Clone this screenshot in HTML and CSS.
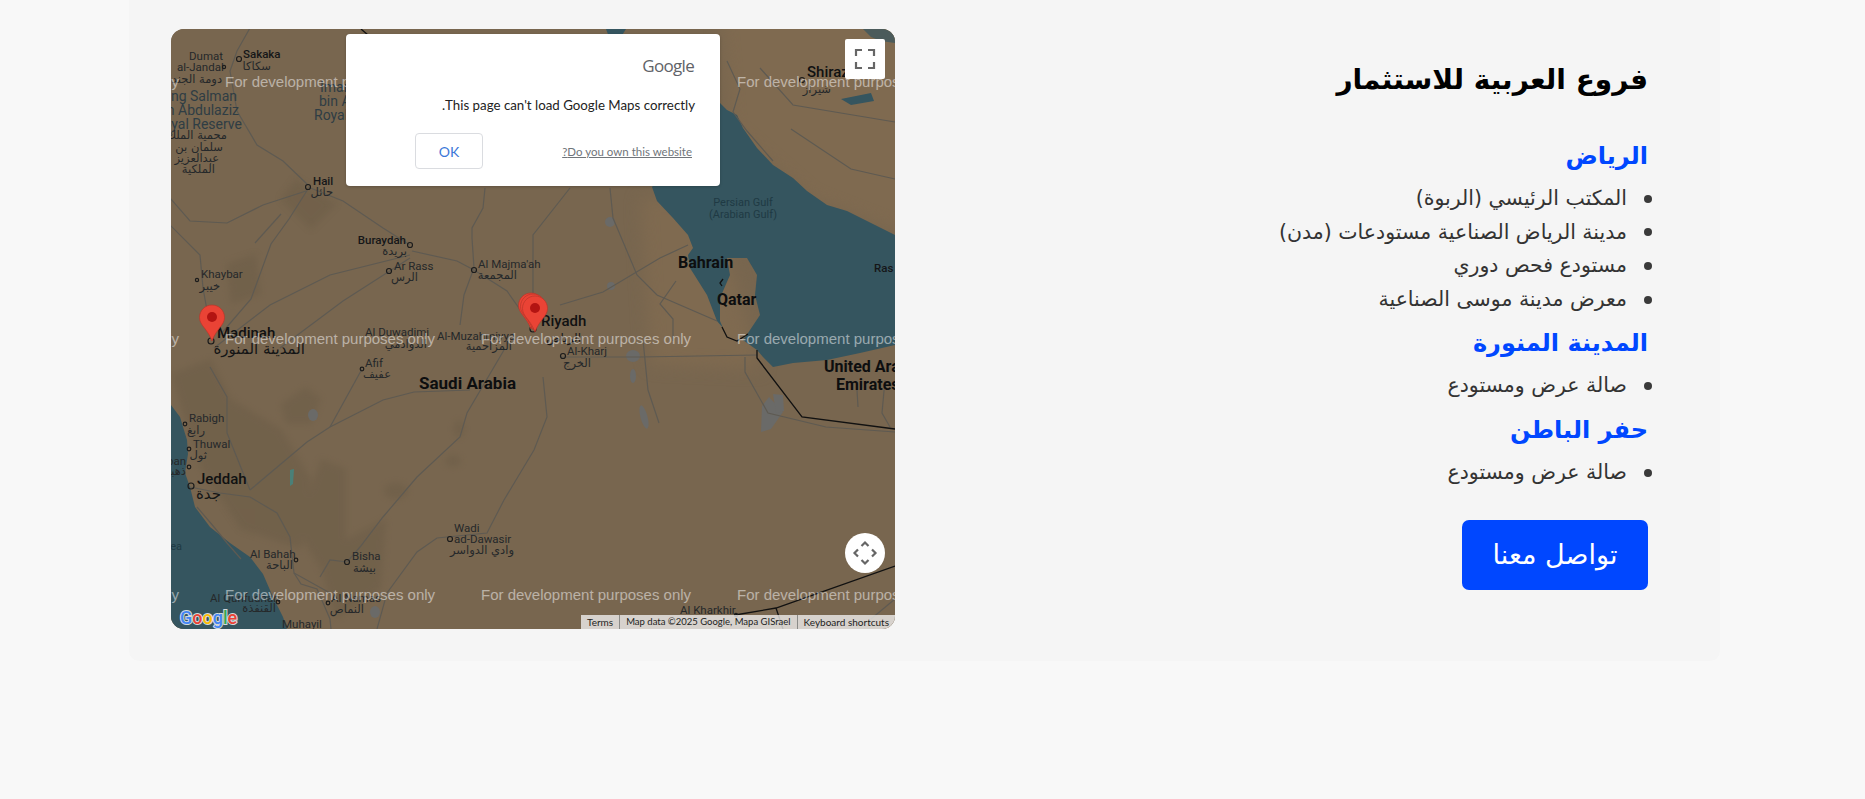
FILE: index.html
```html
<!DOCTYPE html>
<html lang="ar" dir="rtl">
<head>
<meta charset="utf-8">
<title>فروع العربية للاستثمار</title>
<link rel="stylesheet" href="styles.css">
</head>
<body>
<main class="card">
  <section class="info">
    <h2 class="title">فروع العربية للاستثمار</h2>
    <h3 class="city">الرياض</h3>
    <ul class="branches">
      <li>المكتب الرئيسي (الربوة)</li>
      <li>مدينة الرياض الصناعية مستودعات (مدن)</li>
      <li>مستودع فحص دوري</li>
      <li>معرض مدينة موسى الصناعية</li>
    </ul>
    <h3 class="city">المدينة المنورة</h3>
    <ul class="branches">
      <li>صالة عرض ومستودع</li>
    </ul>
    <h3 class="city">حفر الباطن</h3>
    <ul class="branches">
      <li>صالة عرض ومستودع</li>
    </ul>
    <a class="contact" href="#">تواصل معنا</a>
  </section>
  <div class="map" dir="ltr">
    <svg class="map-art" viewBox="0 0 724 600" width="724" height="600">
      <rect width="724" height="600" fill="#78664f"/>
      <path class="tint" d="M549 -20H744V210L640 170 560 100Z"/>
      <path class="tint" d="M470 170H540L590 340 480 335Z"/>
      <g class="terrain">
        <path d="M0 345L40 330 60 370 110 400 140 450 130 520 70 500 30 440Z"/>
        <path d="M110 375L135 358 150 370 140 395 115 395Z"/>
        <path d="M150 430L175 440 175 510 215 490 210 560 165 590 150 540 125 500Z"/>
        <path d="M110 170L125 150 165 175 140 200Z"/>
        <path d="M55 235L85 225 90 265 60 275Z"/>
        <ellipse cx="225" cy="462" rx="12" ry="8"/>
        <ellipse cx="282" cy="432" rx="8" ry="6"/>
        <ellipse cx="288" cy="400" rx="5" ry="9"/>
      </g>
      <!-- Persian Gulf -->
      <path fill="#35555f" d="M549 74L556 81 566 86 572 99 586 119 602 136 622 149 636 162 656 176 676 182 696 192 724 206V316L689 324 656 331 622 334 602 338 592 328 586 321 572 311 577 304 589 286 584 266 586 246 576 229 556 229 559 246 549 269 549 292 552 299 546 292 536 266 519 239 517 226 522 219 517 206 502 189 486 172 481 158Z"/>
      <!-- Red Sea -->
      <path fill="#35555f" d="M0 376L9 388 16 411 17 425 14 444 19 458 24 478 39 498 59 514 79 528 92 545 102 568 112 588 116 600H0Z"/>
      <path fill="#35555f" d="M435 0H455L450 8 438 8Z"/>
      <path fill="#35555f" opacity=".7" d="M692 0H724V14L710 12 700 8Z"/>
      <path fill="#35555f" d="M670 70L700 64 703 72 680 76Z"/>
      <!-- Lakes and salt flats -->
      <g fill="#6a6a68">
        <ellipse cx="462" cy="327" rx="7" ry="6"/>
        <ellipse cx="462" cy="347" rx="3" ry="7"/>
        <ellipse cx="473" cy="388" rx="3.500" ry="12" transform="rotate(-15 473 388)"/>
        <path d="M591 377L598 368 612 383 600 400 590 403Z"/>
        <path d="M602 365L612 366 613 382 605 384Z"/>
        <ellipse cx="439" cy="193" rx="5" ry="5"/>
        <ellipse cx="440" cy="257" rx="4" ry="4"/>
        <ellipse cx="142" cy="386" rx="5" ry="6"/>
        <ellipse cx="204" cy="583" rx="5" ry="6"/>
      </g>
      <path fill="#4a8078" d="M119 441L123 440 122 455 119 457Z"/>
      <!-- Roads -->
      <g class="roads">
        <path d="M79 -1L66 22 59 42 66 82 86 116 112 132 137 156"/>
        <path d="M137 158L172 172 212 199 239 216"/>
        <path d="M137 160L118 190 100 215 80 270 49 306"/>
        <path d="M110 185L84 214"/>
        <path d="M-1 169L19 192 56 194 92 176 135 162"/>
        <path d="M-1 196L29 226 32 259 41 309"/>
        <path d="M241 222L286 232 303 241 336 262 362 299"/>
        <path d="M43 319L99 276 159 246 239 226"/>
        <path d="M109 319L172 272 239 229"/>
        <path d="M301 209L303 239 293 266 289 296"/>
        <path d="M314 159L312 179 301 199 301 209"/>
        <path d="M399 159L362 206 362 266"/>
        <path d="M79 461L136 413 159 398 212 371 243 363 299 361"/>
        <path d="M159 398L191 340"/>
        <path d="M333 321L296 384 289 408 246 448 212 488 189 518 176 533"/>
        <path d="M372 348L376 388 363 421 333 471 316 504 266 509 246 523 216 564 206 600"/>
        <path d="M39 338L56 368 56 404 79 461"/>
        <path d="M19 458L49 464 79 468 106 484 119 508 123 544 159 564"/>
        <path d="M26 478L43 498 56 514 70 530"/>
        <path d="M149 548L159 531 176 533"/>
        <path d="M123 544L130 555 146 560 159 590 160 600"/>
        <path d="M389 276L432 263 489 229 517 216"/>
        <path d="M439 159L442 189 466 246 486 266 546 292"/>
        <path d="M505 252L489 275 502 290 502 312"/>
        <path d="M556 32L569 60 562 83 576 102 602 132"/>
        <path d="M589 39L622 76 724 93"/>
        <path d="M620 100L680 140 724 150"/>
        <path d="M389 328L469 328 586 326"/>
        <path d="M574 328L574 343 597 384 655 398 724 403"/>
        <path d="M472 311L477 361 488 394"/>
        <path d="M686 361L687 378"/>
        <path d="M714 351L711 384 719 398"/>
        <path d="M700 590L724 570"/>
      </g>
      <!-- Borders -->
      <g class="borders">
        <path d="M586 321L586 329 631 388 724 400"/>
        <path d="M564 586L605 579 724 537"/>
        <path d="M605 579L612 600"/>
        <path d="M551 298L556 308 566 312 577 305"/>
        <path d="M551 257L549 254 552 250"/>
        <path d="M190 0L197 6"/>
      </g>
      <!-- Latin labels -->
      <g class="lbl">
        <text x="18" y="31">Dumat</text>
        <text x="6" y="42">al-Jandal</text>
        <text x="72" y="29" class="med">Sakaka</text>
        <text x="142" y="156" class="med">Hail</text>
        <text x="235" y="215" text-anchor="end" class="med">Buraydah</text>
        <text x="223" y="241">Ar Rass</text>
        <text x="307" y="239">Al Majma'ah</text>
        <text x="30" y="249">Khaybar</text>
        <text x="194" y="307">Al Duwadimi</text>
        <text x="266" y="311">Al-Muzahmiyya</text>
        <text x="396" y="326">Al-Kharj</text>
        <text x="194" y="338">Afif</text>
        <text x="18" y="393">Rabigh</text>
        <text x="22" y="419">Thuwal</text>
        <text x="15" y="436" text-anchor="end">Dhahban</text>
        <text x="79" y="529">Al Bahah</text>
        <text x="181" y="531">Bisha</text>
        <text x="283" y="503">Wadi</text>
        <text x="283" y="514">ad-Dawasir</text>
        <text x="39" y="573">Al Qunfudhah</text>
        <text x="160" y="573">Al Namas</text>
        <text x="111" y="599">Muhayil</text>
        <text x="509" y="585">Al Kharkhir</text>
        <text x="703" y="243" class="med">Ras</text>
      </g>
      <g class="lbl lbl-park">
        <text x="66" y="72" text-anchor="end">King Salman</text>
        <text x="68" y="86" text-anchor="end">bin Abdulaziz</text>
        <text x="71" y="100" text-anchor="end">Royal Reserve</text>
        <text x="149" y="63">Imam Turki</text>
        <text x="148" y="77">bin Abdullah</text>
        <text x="143" y="91">Royal Reserve</text>
      </g>
      <g class="lbl lbl-sea">
        <text x="572" y="177" text-anchor="middle">Persian Gulf</text>
        <text x="572" y="189" text-anchor="middle">(Arabian Gulf)</text>
        <text x="11" y="521" text-anchor="end">Red Sea</text>
      </g>
      <g class="lbl lbl-big">
        <text x="46" y="309">Madinah</text>
        <text x="370" y="297">Riyadh</text>
        <text x="26" y="455">Jeddah</text>
        <text x="636" y="48">Shiraz</text>
      </g>
      <g class="lbl lbl-country">
        <text x="248" y="360" class="saudi">Saudi Arabia</text>
        <text x="507" y="239">Bahrain</text>
        <text x="546" y="276">Qatar</text>
        <text x="653" y="343">United Arab</text>
        <text x="665" y="361">Emirates</text>
      </g>
      <!-- Arabic labels -->
      <g class="lbl-ar" direction="rtl">
        <text x="51" y="54">دومة الجندل</text>
        <text x="100" y="41">سكاكا</text>
        <text x="56" y="110">محمية الملك</text>
        <text x="52" y="122">سلمان بن</text>
        <text x="48" y="133">عبدالعزيز</text>
        <text x="44" y="144">الملكية</text>
        <text x="162" y="167">حائل</text>
        <text x="236" y="226">بريدة</text>
        <text x="247" y="252">الرس</text>
        <text x="346" y="250">المجمعة</text>
        <text x="49" y="261">خيبر</text>
        <text x="134" y="325" class="ar-big">المدينة المنورة</text>
        <text x="410" y="313" class="ar-mid">الرياض</text>
        <text x="256" y="319">الدوادمي</text>
        <text x="341" y="321">المزاحمية</text>
        <text x="420" y="338">الخرج</text>
        <text x="220" y="349">عفيف</text>
        <text x="34" y="405">رابغ</text>
        <text x="36" y="430">ثول</text>
        <text x="15" y="446">ذهبان</text>
        <text x="50" y="470" class="ar-big">جدة</text>
        <text x="122" y="540">الباحة</text>
        <text x="205" y="543">بيشة</text>
        <text x="343" y="525">وادي الدواسر</text>
        <text x="105" y="583">القنفذة</text>
        <text x="193" y="584">النماص</text>
        <text x="660" y="64">شيراز</text>
      </g>
      <!-- Place dots -->
      <g class="dots">
        <circle cx="68" cy="30" r="2.500"/><circle cx="53" cy="38" r="1.600"/>
        <circle cx="137" cy="158" r="2.500"/><circle cx="239" cy="216" r="2.500"/>
        <circle cx="218" cy="242" r="2.500"/><circle cx="303" cy="241" r="2.500"/>
        <circle cx="26" cy="251" r="1.600"/><circle cx="40" cy="312" r="3"/>
        <circle cx="362" cy="300" r="3"/><circle cx="392" cy="327" r="2.500"/>
        <circle cx="191" cy="340" r="1.800"/><circle cx="14" cy="395" r="1.800"/>
        <circle cx="18" cy="420" r="1.800"/><circle cx="18" cy="438" r="1.800"/>
        <circle cx="20" cy="457" r="3"/><circle cx="125" cy="531" r="1.800"/>
        <circle cx="176" cy="533" r="2.500"/><circle cx="279" cy="510" r="2.500"/>
        <circle cx="107" cy="573" r="1.800"/><circle cx="157" cy="574" r="1.800"/>
        <circle cx="631" cy="51" r="2.500"/><circle cx="565" cy="586" r="1.600"/>
      </g>
      <!-- Watermarks -->
      <g class="mark">
        <text x="54" y="58">For development purposes only</text>
        <text x="310" y="58">For development purposes only</text>
        <text x="566" y="58">For development purposes only</text>
        <text x="54" y="315">For development purposes only</text>
        <text x="310" y="315">For development purposes only</text>
        <text x="566" y="315">For development purposes only</text>
        <text x="54" y="571">For development purposes only</text>
        <text x="310" y="571">For development purposes only</text>
        <text x="566" y="571">For development purposes only</text>
        <text x="-202" y="58">For development purposes only</text>
        <text x="-202" y="315">For development purposes only</text>
        <text x="-202" y="571">For development purposes only</text>
      </g>
      <!-- Pins -->
      <g class="pin">
        <path d="M360 264c-7 0-12.500 5.500-12.500 12.500 0 8 8 11 12.500 23.500 4.500-12.500 12.500-15.500 12.500-23.500 0-7-5.500-12.500-12.500-12.500z"/>
        <path d="M362 265c-7 0-12.500 5.500-12.500 12.500 0 8 8 11 12.500 23.500 4.500-12.500 12.500-15.500 12.500-23.500 0-7-5.500-12.500-12.500-12.500z"/>
        <path d="M364 267c-7 0-12.500 5.500-12.500 12.500 0 8 8 11 12.500 23.500 4.500-12.500 12.500-15.500 12.500-23.500 0-7-5.500-12.500-12.500-12.500z"/>
        <circle class="pin-dot" cx="364" cy="279" r="5"/>
        <path d="M41 276c-7 0-12.500 5.500-12.500 12.500 0 8 8 11 12.500 23.500 4.500-12.500 12.500-15.500 12.500-23.500 0-7-5.500-12.500-12.500-12.500z"/>
        <circle class="pin-dot" cx="41" cy="288" r="5"/>
      </g>
      <text class="glogo" x="9" y="595"><tspan fill="#4285f4">G</tspan><tspan fill="#ea4335">o</tspan><tspan fill="#fbbc05">o</tspan><tspan fill="#4285f4">g</tspan><tspan fill="#34a853">l</tspan><tspan fill="#ea4335">e</tspan></text>
    </svg>

    <div class="dialog">
      <div class="dialog-logo">Google</div>
      <p class="dialog-msg" dir="rtl">This page can't load Google Maps correctly.</p>
      <div class="dialog-actions">
        <button class="dialog-ok" type="button">OK</button>
        <a class="dialog-link" href="#" dir="rtl">Do you own this website?</a>
      </div>
    </div>

    <button class="ctl ctl-full" type="button" aria-label="Toggle fullscreen view">
      <svg viewBox="0 0 40 40" width="40" height="40"><path d="M11 17V11h6M23 11h6v6M29 23v6h-6M17 29h-6v-6"/></svg>
    </button>
    <button class="ctl ctl-pan" type="button" aria-label="Map camera controls">
      <svg viewBox="0 0 40 40" width="40" height="40"><path d="M16.500 13L20 9.500 23.500 13M16.500 27L20 30.500 23.500 27M13 16.500L9.500 20 13 23.500M27 16.500L30.500 20 27 23.500"/></svg>
    </button>

    <div class="attrib">
      <span>Terms</span>
      <span class="attrib-data">Map data ©2025 Google, Mapa GISrael</span>
      <span>Keyboard shortcuts</span>
    </div>
  </div>
</main>
</body>
</html>
```
FILE: styles.css
```css
* { box-sizing: border-box; }
html, body { margin: 0; padding: 0; }
body {
  background: #f8f8f8;
  height: 799px;
  overflow: hidden;
  font-family: "DejaVu Sans", "Noto Sans", sans-serif;
}
.card {
  display: flex;
  justify-content: space-between;
  align-items: flex-start;
  width: 1591px;
  height: 661px;
  margin: 0 145px 0 129px;
  padding: 29px 72px 0 42px;
  background: #f5f5f5;
  border-radius: 0 0 10px 10px;
}
.info {
  display: flex;
  flex-direction: column;
  align-items: flex-start;
  padding-top: 28px;
}
.title {
  margin: 0 0 34px;
  font-size: 28px;
  line-height: 46px;
  font-weight: 700;
  color: #000;
}
.city {
  margin: 0 0 7px;
  font-size: 24px;
  line-height: 38px;
  font-weight: 700;
  color: #0047ff;
}
.branches {
  margin: 0 -4px 8px 0;
  padding: 0;
  list-style: none;
  color: #333;
  font-size: 20.5px;
  line-height: 33.6px;
}
.branches li {
  display: flex;
  align-items: center;
  gap: 17px;
}
.branches li::before {
  content: "";
  flex: none;
  width: 8px;
  height: 8px;
  border-radius: 50%;
  background: #3a3a3a;
}
.contact {
  display: flex;
  align-items: center;
  justify-content: center;
  width: 186px;
  height: 70px;
  margin-top: 22px;
  background: #0047ff;
  border-radius: 7px;
  color: #fff;
  font-size: 27px;
  text-decoration: none;
}
.map {
  position: relative;
  flex: none;
  width: 724px;
  height: 600px;
  border-radius: 13px;
  overflow: hidden;
  background: #78664f;
}
.map-art { display: block; }
.tint { fill: #7f6a50; filter: blur(8px); }
.terrain { fill: #6f5f49; filter: blur(3px); opacity: 0.7; }
.roads path { fill: none; stroke: #5e5a52; stroke-width: 1.2; }
.borders path { fill: none; stroke: #111; stroke-width: 1.3; }
.dots circle { fill: none; stroke: #1c1c1c; stroke-width: 1.2; }
.lbl { font-family: Roboto, sans-serif; font-size: 11.5px; fill: #25282a; }
.lbl .med { font-weight: 500; fill: #151618; }
.lbl-park { font-size: 14px; fill: #2f3d44; }
.lbl-sea { font-size: 11px; fill: #1f3a44; }
.lbl-big { font-size: 15px; font-weight: 500; fill: #101112; }
.lbl-country { font-size: 16px; font-weight: 700; fill: #0d0e0f; }
.lbl-country .saudi { font-size: 17px; }
.lbl-ar { font-family: "DejaVu Sans", sans-serif; font-size: 11.5px; fill: #25282a; }
.lbl-ar .ar-big { font-size: 15px; fill: #141516; }
.lbl-ar .ar-mid { font-size: 12px; fill: #141516; }
.mark {
  font-family: "Liberation Sans", sans-serif;
  font-size: 15px;
  fill: rgba(255, 255, 255, 0.5);
}
.pin path { fill: #ea4335; stroke: #b8362a; stroke-width: 0.7; }
.pin-dot { fill: #b31412; }
.glogo {
  font-family: Roboto, sans-serif;
  font-size: 18px;
  font-weight: 500;
  stroke: rgba(255, 255, 255, 0.8);
  stroke-width: 2px;
  paint-order: stroke;
}
.dialog {
  position: absolute;
  left: 175px;
  top: 5px;
  width: 374px;
  height: 152px;
  padding: 20px 28px 0 24px;
  background: #fff;
  border-radius: 4px;
  box-shadow: 0 1px 3px rgba(0, 0, 0, 0.2);
  color: #222;
  font-family: Lato, sans-serif;
}
.dialog-logo {
  text-align: right;
  margin-right: -2px;
  font-family: "Open Sans", sans-serif;
  font-size: 17px;
  line-height: 24px;
  letter-spacing: -0.7px;
  color: #5f6368;
}
.dialog-msg {
  margin: 15px -3px 0 0;
  font-size: 13.3px;
  line-height: 24px;
  text-align: right;
}
.dialog-actions {
  display: flex;
  align-items: center;
  justify-content: space-between;
  margin-top: 16px;
  margin-left: 45px;
}
.dialog-ok {
  width: 68px;
  height: 36px;
  background: #fff;
  border: 1px solid #dadce0;
  border-radius: 4px;
  color: #3b78d8;
  font-family: Lato, sans-serif;
  font-size: 14px;
}
.dialog-link {
  font-size: 11.5px;
  color: #70757a;
}
.ctl {
  position: absolute;
  right: 10px;
  width: 40px;
  height: 40px;
  padding: 0;
  background: #fff;
  border: 0;
}
.ctl svg { display: block; }
.ctl path { fill: none; stroke: #666; stroke-width: 2.2; }
.ctl-full { top: 10px; border-radius: 2px; }
.ctl-pan { bottom: 56px; border-radius: 50%; }
.attrib {
  position: absolute;
  right: 0;
  bottom: 0;
  display: flex;
  height: 14px;
  background: rgba(245, 245, 245, 0.76);
  font-family: Lato, sans-serif;
  font-size: 10px;
  line-height: 14px;
  color: #222;
}
.attrib span { padding: 0 6px; white-space: nowrap; }
.attrib span + span { border-left: 1px solid #8b8b88; }
.attrib .attrib-data { font-size: 9.5px; }
```
